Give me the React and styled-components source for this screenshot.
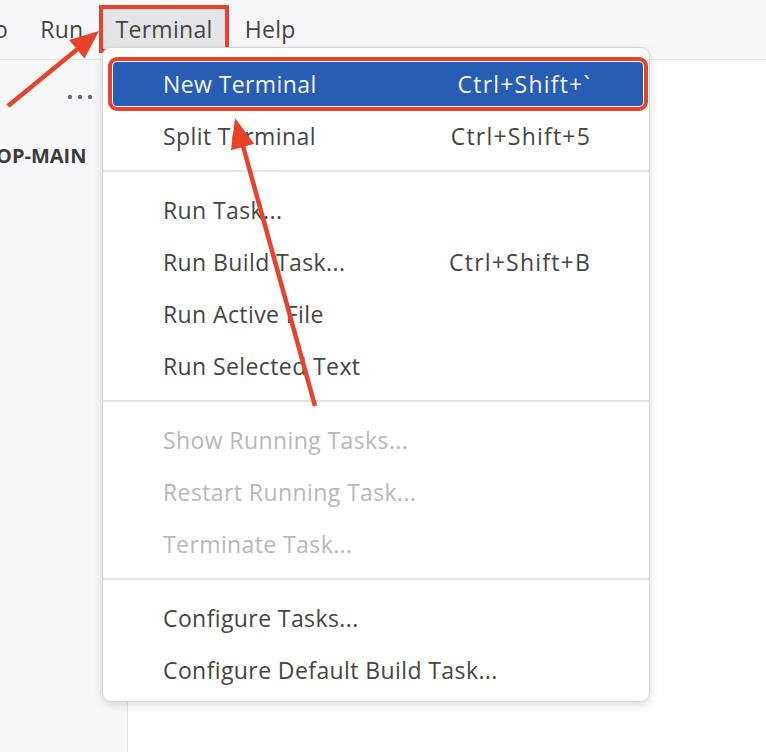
import React from 'react';
import styled, { createGlobalStyle } from 'styled-components';

const GlobalStyle = createGlobalStyle`
  html, body {
    margin: 0;
    padding: 0;
    background: #fff;
  }
  body {
    font-family: "Open Sans", "Noto Sans", sans-serif;
  }
`;

const menuBar = ['Go', 'Run', 'Terminal', 'Help'];

const items = [
  [
    { label: 'New Terminal', keys: 'Ctrl+Shift+`', active: true },
    { label: 'Split Terminal', keys: 'Ctrl+Shift+5' },
  ],
  [
    { label: 'Run Task...' },
    { label: 'Run Build Task...', keys: 'Ctrl+Shift+B' },
    { label: 'Run Active File' },
    { label: 'Run Selected Text' },
  ],
  [
    { label: 'Show Running Tasks...', disabled: true },
    { label: 'Restart Running Task...', disabled: true },
    { label: 'Terminate Task...', disabled: true },
  ],
  [
    { label: 'Configure Tasks...' },
    { label: 'Configure Default Build Task...' },
  ],
];

const App = () => {
  return (
    <>
      <GlobalStyle />
      <StPage>
        <StTitleBar>
          {menuBar.map((name) => (
            <StBarItem key={name} open={name === 'Terminal'} first={name === 'Go'}>
              {name}
            </StBarItem>
          ))}
        </StTitleBar>
        <StBody>
          <StSidebar>
            <StSideHead>
              <svg width="26" height="8" viewBox="0 0 26 8">
                <circle cx="3" cy="4" r="2.2" fill="#5b6f8e" />
                <circle cx="13" cy="4" r="2.2" fill="#5b6f8e" />
                <circle cx="23" cy="4" r="2.2" fill="#5b6f8e" />
              </svg>
            </StSideHead>
            <StFolder>OP-MAIN</StFolder>
          </StSidebar>
          <StEditor />
        </StBody>

        <StMenu>
          {items.map((group, gi) => (
            <React.Fragment key={gi}>
              {gi > 0 && <StSeparator />}
              {group.map((item) => (
                <StMenuRow
                  key={item.label}
                  active={item.active}
                  disabled={item.disabled}
                >
                  <span>{item.label}</span>
                  {item.keys && <StKeys>{item.keys}</StKeys>}
                </StMenuRow>
              ))}
            </React.Fragment>
          ))}
        </StMenu>

        <StArrows width="766" height="752" viewBox="0 0 766 752">
          <line x1="8" y1="106" x2="80" y2="47" stroke="#e8432a" strokeWidth="4.5" />
          <polygon points="99,31 84.5,58.5 69.1,39.9" fill="#e8432a" />
          <line x1="315" y1="406" x2="243" y2="146" stroke="#e8432a" strokeWidth="4.5" />
          <polygon points="235,118 254.2,143.8 231,150.2" fill="#e8432a" />
        </StArrows>
      </StPage>
    </>
  );
};
export default App;

const StPage = styled.div`
  position: relative;
  width: 766px;
  height: 752px;
  overflow: hidden;
  display: flex;
  flex-direction: column;
  background: #fff;
`;

const StTitleBar = styled.div`
  display: flex;
  align-items: center;
  height: 60px;
  flex-shrink: 0;
  box-sizing: border-box;
  padding-bottom: 2px;
  background: #f8f8fa;
  border-bottom: 1px solid #e6e6e8;
`;

const StBarItem = styled.div`
  display: flex;
  align-items: center;
  height: 40px;
  padding: 0 12px;
  margin: 0 4px;
  margin-left: ${(props) => (props.first ? '-35px' : '4px')};
  font-size: 23px;
  letter-spacing: 0.3px;
  color: #444;
  background: ${(props) => (props.open ? '#e4e4e6' : 'transparent')};
  outline: ${(props) => (props.open ? '4px solid #e8432a' : 'none')};
`;

const StBody = styled.div`
  display: flex;
  flex: 1;
`;

const StSidebar = styled.div`
  width: 127px;
  flex-shrink: 0;
  background: #f8f8fa;
  border-right: 1px solid #e3e3e6;
`;

const StSideHead = styled.div`
  display: flex;
  justify-content: flex-end;
  align-items: center;
  height: 74px;
  padding-right: 34px;
`;

const StFolder = styled.div`
  margin-left: -4px;
  font-size: 20px;
  font-weight: bold;
  color: #3b3b3b;
  line-height: 44px;
`;

const StEditor = styled.div`
  flex: 1;
  background: #fff;
`;

const StMenu = styled.div`
  position: absolute;
  top: 47px;
  left: 102px;
  width: 548px;
  box-sizing: border-box;
  display: flex;
  flex-direction: column;
  padding: 10px 0 5px;
  background: #fff;
  border: 1px solid #d6d6d6;
  border-radius: 9px;
  box-shadow: 0 3px 10px rgba(0, 0, 0, 0.14);
`;

const StMenuRow = styled.div`
  display: flex;
  justify-content: space-between;
  align-items: center;
  height: 44px;
  margin: 4px 6px 4px 10px;
  padding: 0 53px 0 50px;
  border-radius: 4px;
  font-size: 23px;
  letter-spacing: 0.4px;
  color: ${(props) =>
    props.active ? '#f2f6ff' : props.disabled ? '#b8b8b8' : '#454545'};
  background: ${(props) => (props.active ? '#285db4' : 'transparent')};
  outline: ${(props) => (props.active ? '4px solid #e8432a' : 'none')};
  outline-offset: 1px;
`;

const StKeys = styled.span`
  letter-spacing: 1.2px;
  margin-right: -1px;
`;

const StSeparator = styled.div`
  height: 2px;
  margin: 8px 0 12px;
  background: #e4e4e4;
`;

const StArrows = styled.svg`
  position: absolute;
  top: 0;
  left: 0;
  pointer-events: none;
`;
